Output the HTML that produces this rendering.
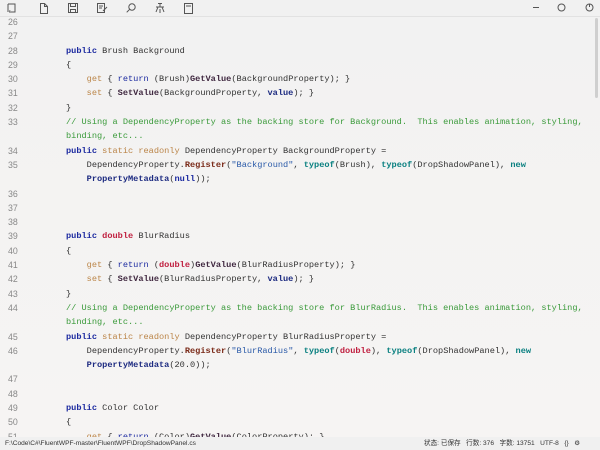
<!DOCTYPE html>
<html><head><meta charset="utf-8"><style>
*{margin:0;padding:0;box-sizing:border-box}
body{width:600px;height:450px;overflow:hidden;background:linear-gradient(180deg,#f2f2f2,#f6f4f3);font-family:"Liberation Sans","Noto Sans CJK SC",sans-serif;position:relative}
#tb{position:absolute;left:0;top:0;width:600px;height:17px;background:#f1f1f1;border-bottom:1px solid #e2e2e2}
#tb svg{position:absolute;top:3px}
#code{position:absolute;left:0;top:15px;width:592px;font-family:"Liberation Mono",monospace;font-size:8.62px;color:#333}
.r{height:14.3px;line-height:14.3px;white-space:pre;position:relative}
.n{position:absolute;left:8px;color:#888;font-family:"Liberation Sans",sans-serif;font-size:8.8px}
.c{position:absolute;left:66px}
.k{color:#1c2aa0;font-weight:bold}.kk{color:#1c2aa0}
.m{color:#bb8548}.g{color:#3a9a3a}.t{color:#0a8080;font-weight:bold}
.b{color:#402840;font-weight:bold}.rg{color:#7a2a18;font-weight:bold}
.s{color:#2a5aa8}.d{color:#c02040;font-weight:bold}.p{color:#1c2a80;font-weight:bold}
#sb{position:absolute;left:0;top:437px;width:600px;height:13px;background:#f0f0f0;font-size:6.6px;color:#333;line-height:13px}
#scroll{position:absolute;right:2px;top:18px;width:3px;height:80px;background:#cfcfcf;border-radius:2px}
</style></head><body>
<div id="tb">
<svg style="left:6px" width="11" height="11" viewBox="0 0 11 11" fill="none" stroke="#555" stroke-width="1"><path d="M2 1h7v8H5M2 1v6M1 8h3v2"/></svg>
<svg style="left:39px" width="10" height="11" viewBox="0 0 10 11" fill="none" stroke="#555"><path d="M1.5 .5h4l3 3v7h-7z M5.5 .5v3h3"/></svg>
<svg style="left:68px" width="10" height="10" viewBox="0 0 10 10" fill="none" stroke="#555"><path d="M.5 .5h9v9h-9z M2.5 .5v3h5v-3 M2.5 9.5v-3h5v3"/></svg>
<svg style="left:97px" width="11" height="10" viewBox="0 0 11 10" fill="none" stroke="#555"><path d="M.5 .5h7v9h-7z M2 3h4M2 5h3M6 8l4-4"/></svg>
<svg style="left:126px" width="10" height="10" viewBox="0 0 10 10" fill="none" stroke="#555"><circle cx="6" cy="4" r="3.2"/><path d="M3.7 6.3L.7 9.3"/></svg>
<svg style="left:155px" width="11" height="11" viewBox="0 0 11 11" fill="none" stroke="#555"><path d="M3 .5h4M5 .5v3M1 4h8M3 4l-2 5M7 4l2 5M5 6v4"/></svg>
<svg style="left:184px" width="9" height="11" viewBox="0 0 9 11" fill="none" stroke="#555"><path d="M.5 .5h8v10h-8z M2 3h5"/></svg>
<svg style="left:533px;top:7px" width="6" height="2"><rect width="6" height="1" fill="#555"/></svg>
<svg style="left:557px" width="9" height="9" fill="none" stroke="#555"><circle cx="4.5" cy="4.5" r="3.5"/></svg>
<svg style="left:585px" width="9" height="9" fill="none" stroke="#555"><circle cx="4.5" cy="4.5" r="3.5"/><path d="M4.5 1v3"/></svg>
</div>
<div id="code">
<div class="r"><span class="n">26</span></div>
<div class="r"><span class="n">27</span></div>
<div class="r"><span class="n">28</span><span class="c"><span class="k">public</span> Brush Background</span></div>
<div class="r"><span class="n">29</span><span class="c">{</span></div>
<div class="r"><span class="n">30</span><span class="c">    <span class="m">get</span> { <span class="kk">return</span> (Brush)<span class="b">GetValue</span>(BackgroundProperty); }</span></div>
<div class="r"><span class="n">31</span><span class="c">    <span class="m">set</span> { <span class="b">SetValue</span>(BackgroundProperty, <span class="p">value</span>); }</span></div>
<div class="r"><span class="n">32</span><span class="c">}</span></div>
<div class="r"><span class="n">33</span><span class="c g">// Using a DependencyProperty as the backing store for Background.  This enables animation, styling,</span></div>
<div class="r"><span class="c g">binding, etc...</span></div>
<div class="r"><span class="n">34</span><span class="c"><span class="k">public</span> <span class="m">static readonly</span> DependencyProperty BackgroundProperty =</span></div>
<div class="r"><span class="n">35</span><span class="c">    DependencyProperty.<span class="rg">Register</span>(<span class="s">"Background"</span>, <span class="t">typeof</span>(Brush), <span class="t">typeof</span>(DropShadowPanel), <span class="t">new</span></span></div>
<div class="r"><span class="c">    <span class="p">PropertyMetadata</span>(<span class="k">null</span>));</span></div>
<div class="r"><span class="n">36</span></div>
<div class="r"><span class="n">37</span></div>
<div class="r"><span class="n">38</span></div>
<div class="r"><span class="n">39</span><span class="c"><span class="k">public</span> <span class="d">double</span> BlurRadius</span></div>
<div class="r"><span class="n">40</span><span class="c">{</span></div>
<div class="r"><span class="n">41</span><span class="c">    <span class="m">get</span> { <span class="kk">return</span> (<span class="d">double</span>)<span class="b">GetValue</span>(BlurRadiusProperty); }</span></div>
<div class="r"><span class="n">42</span><span class="c">    <span class="m">set</span> { <span class="b">SetValue</span>(BlurRadiusProperty, <span class="p">value</span>); }</span></div>
<div class="r"><span class="n">43</span><span class="c">}</span></div>
<div class="r"><span class="n">44</span><span class="c g">// Using a DependencyProperty as the backing store for BlurRadius.  This enables animation, styling,</span></div>
<div class="r"><span class="c g">binding, etc...</span></div>
<div class="r"><span class="n">45</span><span class="c"><span class="k">public</span> <span class="m">static readonly</span> DependencyProperty BlurRadiusProperty =</span></div>
<div class="r"><span class="n">46</span><span class="c">    DependencyProperty.<span class="rg">Register</span>(<span class="s">"BlurRadius"</span>, <span class="t">typeof</span>(<span class="d">double</span>), <span class="t">typeof</span>(DropShadowPanel), <span class="t">new</span></span></div>
<div class="r"><span class="c">    <span class="p">PropertyMetadata</span>(20.0));</span></div>
<div class="r"><span class="n">47</span></div>
<div class="r"><span class="n">48</span></div>
<div class="r"><span class="n">49</span><span class="c"><span class="k">public</span> Color Color</span></div>
<div class="r"><span class="n">50</span><span class="c">{</span></div>
<div class="r"><span class="n">51</span><span class="c">    <span class="m">get</span> { <span class="kk">return</span> (Color)<span class="b">GetValue</span>(ColorProperty); }</span></div>
</div>
<div id="scroll"></div>
<div id="sb"><span style="position:absolute;left:5px">F:\Code\C#\FluentWPF-master\FluentWPF\DropShadowPanel.cs</span>
<span style="position:absolute;left:424px;white-space:pre">状态: 已保存   行数: 376   字数: 13751   UTF-8   {}   ⚙</span></div>
</body></html>
